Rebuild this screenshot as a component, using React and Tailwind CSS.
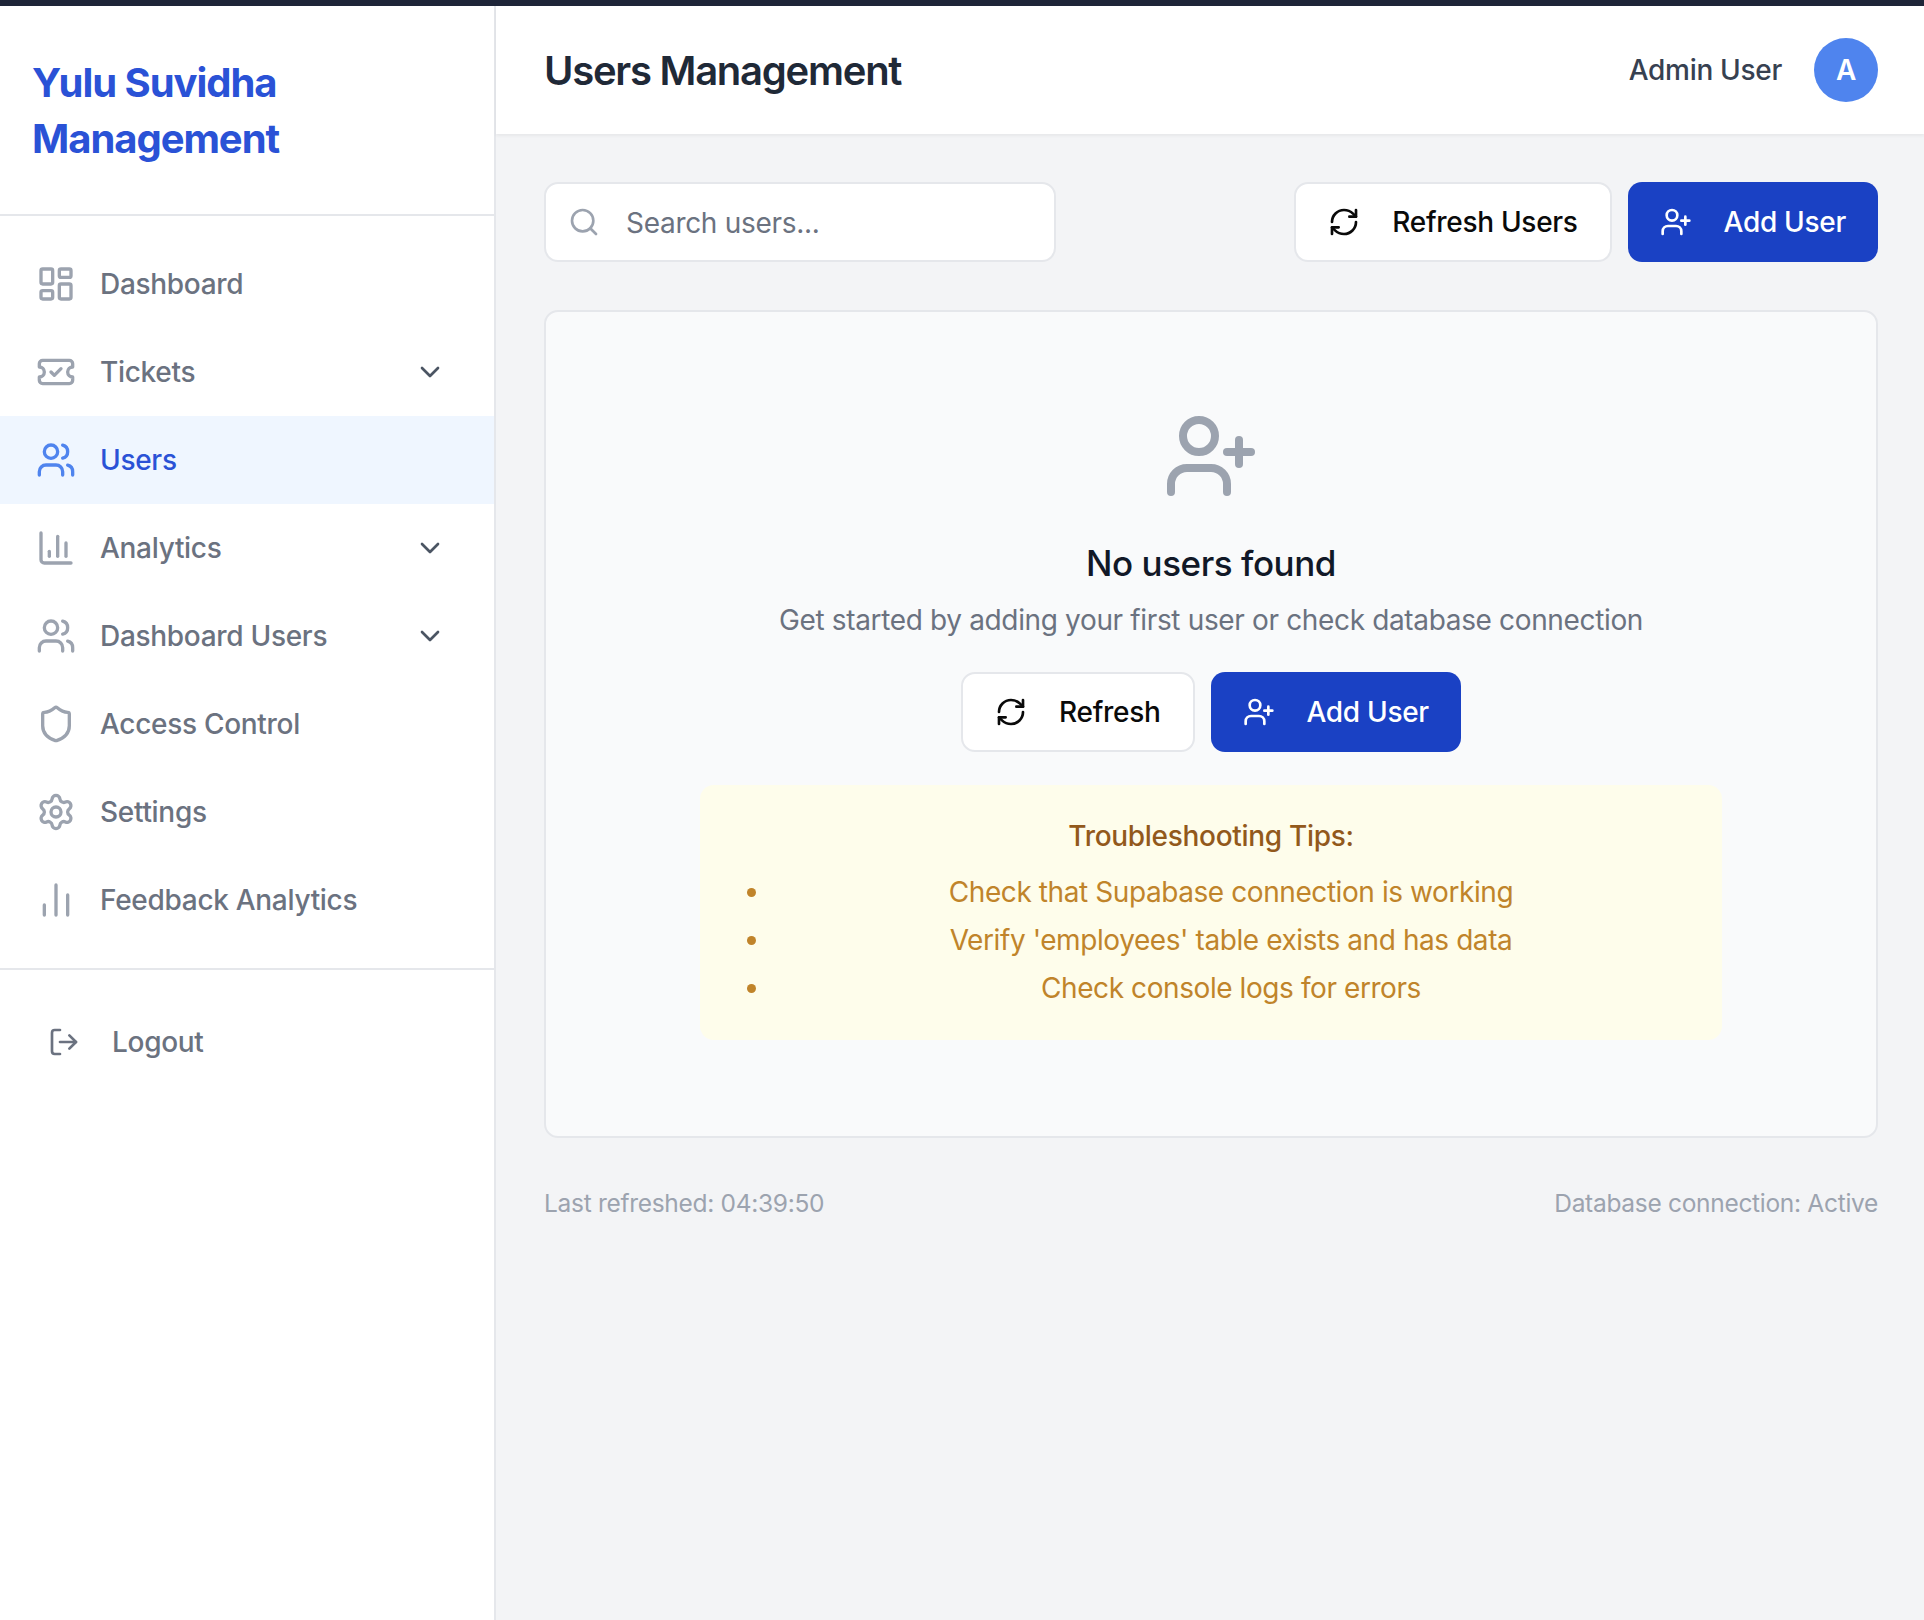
import {
  ChartColumn,
  ChartNoAxesColumn,
  ChevronDown,
  LayoutDashboard,
  LogOut,
  RefreshCw,
  Search,
  Settings,
  Shield,
  TicketCheck,
  UserPlus,
  Users,
} from 'lucide-react';

const navItems = [
  { label: 'Dashboard', icon: LayoutDashboard },
  { label: 'Tickets', icon: TicketCheck, hasMenu: true },
  { label: 'Users', icon: Users, active: true },
  { label: 'Analytics', icon: ChartColumn, hasMenu: true },
  { label: 'Dashboard Users', icon: Users, hasMenu: true },
  { label: 'Access Control', icon: Shield },
  { label: 'Settings', icon: Settings },
  { label: 'Feedback Analytics', icon: ChartNoAxesColumn },
];

const tips = [
  'Check that Supabase connection is working',
  "Verify 'employees' table exists and has data",
  'Check console logs for errors',
];

function NavItem({ label, icon: Icon, hasMenu, active }) {
  return (
    <a
      className={`flex h-[88px] items-center pl-9 pr-12 ${
        active ? 'bg-[#eff6ff] text-[#2a52d6]' : 'text-[#6b7280]'
      }`}
    >
      <Icon
        size={40}
        strokeWidth={2}
        className={`shrink-0 ${active ? 'text-[#4f84ee]' : 'text-[#9ca3af]'}`}
      />
      <span className="ml-6 flex-1 text-[28px] font-medium">{label}</span>
      {hasMenu && <ChevronDown size={32} className="text-[#4b5563]" />}
    </a>
  );
}

function OutlineButton({ children }) {
  return (
    <button className="flex h-20 items-center gap-8 rounded-[14px] border-2 border-[#e5e7eb] bg-white px-8 text-[28px] font-medium text-[#0a0a0a]">
      <RefreshCw size={32} />
      {children}
    </button>
  );
}

function AddUserButton() {
  return (
    <button className="flex h-20 items-center gap-8 rounded-[14px] bg-[#1a41c4] px-8 text-[28px] font-medium text-white">
      <UserPlus size={32} />
      Add User
    </button>
  );
}

export default function App() {
  return (
    <div className="flex min-h-[1620px] flex-col bg-[#f3f4f6] font-[Inter,sans-serif] tracking-[-0.3px]">
      <div className="h-1.5 bg-[#1e2538]" />

      <div className="flex flex-1">
        {/* Sidebar */}
        <aside className="w-[496px] shrink-0 border-r-2 border-[#e5e7eb] bg-white">
          <div className="border-b-2 border-[#e5e7eb] pt-[49px] pr-8 pb-[47px] pl-8">
            <h1 className="text-[40px] leading-[56px] font-bold tracking-[-1.05px] text-[#2a52d6]">
              Yulu Suvidha Management
            </h1>
          </div>

          <nav className="border-b-2 border-[#e5e7eb] py-6">
            {navItems.map((item) => (
              <NavItem key={item.label} {...item} />
            ))}
          </nav>

          <a className="mt-7 flex h-[88px] items-center pl-12 text-[28px] font-medium text-[#6b7280]">
            <LogOut size={32} />
            <span className="ml-8">Logout</span>
          </a>
        </aside>

        {/* Main */}
        <div className="min-w-0 flex-1">
          <header className="flex h-32 items-center justify-between bg-white pr-[46px] pl-12 shadow-[0_2px_3px_rgba(0,0,0,0.05)]">
            <h2 className="pt-0.5 text-[40px] font-semibold tracking-[-1.25px] text-[#1f2937]">
              Users Management
            </h2>
            <div className="flex items-center gap-8">
              <span className="text-[28px] font-medium text-[#374151]">Admin User</span>
              <div className="flex h-16 w-16 items-center justify-center rounded-full bg-[#4f84ee] text-[28px] font-semibold text-white">
                A
              </div>
            </div>
          </header>

          <main className="pt-12 pr-[46px] pl-12">
            <div className="flex items-center justify-between">
              <label className="flex h-20 w-[512px] items-center gap-[26px] rounded-[14px] border-2 border-[#e5e7eb] bg-white pl-[22px]">
                <Search size={32} className="shrink-0 text-[#9ca3af]" />
                <input
                  placeholder="Search users..."
                  className="min-w-0 flex-1 bg-transparent pt-0.5 text-[28px] outline-none placeholder:text-[#6b7280]"
                />
              </label>
              <div className="flex gap-4">
                <OutlineButton>Refresh Users</OutlineButton>
                <AddUserButton />
              </div>
            </div>

            {/* Empty state */}
            <section className="mt-12 flex h-[828px] flex-col items-center rounded-[14px] border-2 border-[#e5e7eb] bg-[#f9fafb] pt-24">
              <UserPlus size={96} className="text-[#9ca3af]" />
              <h3 className="mt-[35px] text-[35px] leading-[49px] font-medium tracking-[-0.45px] text-[#111827]">
                No users found
              </h3>
              <p className="mt-[11px] text-[28px] leading-[42px] tracking-[-0.35px] text-[#6b7280]">
                Get started by adding your first user or check database connection
              </p>
              <div className="mt-[31px] flex gap-4">
                <OutlineButton>Refresh</OutlineButton>
                <AddUserButton />
              </div>

              <div className="mt-[33px] w-[1022px] rounded-[14px] bg-[#fefdeb] px-8 py-7">
                <h4 className="text-center text-[28px] leading-[46px] font-medium text-[#92591c]">
                  Troubleshooting Tips:
                </h4>
                <ul className="mt-[9px] list-disc pl-10 text-center text-[28px] leading-[48px] tracking-[-0.42px] text-[#c0842a]">
                  {tips.map((tip) => (
                    <li key={tip}>{tip}</li>
                  ))}
                </ul>
              </div>
            </section>

            <div className="mt-12 flex justify-between text-[24.5px] leading-[35px] text-[#9ca3af]">
              <span>Last refreshed: 04:39:50</span>
              <span>Database connection: Active</span>
            </div>
          </main>
        </div>
      </div>
    </div>
  );
}
